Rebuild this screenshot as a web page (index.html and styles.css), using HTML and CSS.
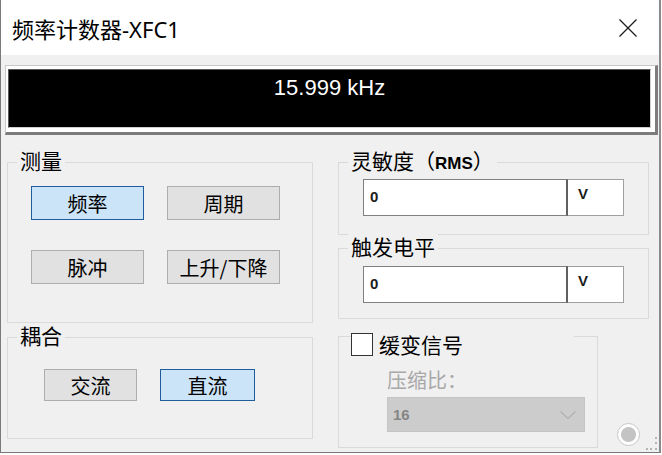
FILE: index.html
```html
<!DOCTYPE html>
<html lang="zh">
<head>
<meta charset="UTF-8">
<title>频率计数器-XFC1</title>
<link rel="stylesheet" href="styles.css">
</head>
<body>

<div class="window">
    <div class="titlebar">
        <span class="title">频率计数器-XFC1</span>
        <svg class="close" viewBox="0 0 18 18" width="18" height="18">
            <path d="M0.5 0.5 L17.5 17.5 M17.5 0.5 L0.5 17.5" stroke="#1a1a1a" stroke-width="1.2" fill="none"/>
        </svg>
    </div>

    <div class="content">
        <div class="display">
            <div class="screen">15.999 kHz</div>
        </div>

        <div class="panels">
            <div class="col col-left">
                <div class="group g-measure">
                    <span class="group-title">测量</span>
                    <div class="btn-grid">
                        <button class="btn on">频率</button>
                        <button class="btn">周期</button>
                        <button class="btn">脉冲</button>
                        <button class="btn">上升/下降</button>
                    </div>
                </div>
                <div class="group g-coupling">
                    <span class="group-title">耦合</span>
                    <div class="btn-row">
                        <button class="btn btn-ac">交流</button>
                        <button class="btn btn-dc on">直流</button>
                    </div>
                </div>
            </div>

            <div class="col col-right">
                <div class="group g-sens">
                    <span class="group-title">灵敏度（<b>RMS</b>）</span>
                    <div class="field">
                        <div class="input">0</div>
                        <div class="unit">V</div>
                    </div>
                </div>
                <div class="group g-trig">
                    <span class="group-title">触发电平</span>
                    <div class="field">
                        <div class="input">0</div>
                        <div class="unit">V</div>
                    </div>
                </div>
                <div class="ramp-row">
                    <div class="group g-ramp">
                        <label class="check-title"><span class="box"></span>缓变信号</label>
                        <div class="sub-label">压缩比：</div>
                        <div class="select">
                            <span>16</span>
                            <svg viewBox="0 0 16 8" width="16" height="8">
                                <path d="M0.5 0.5 L8 7.5 L15.5 0.5" stroke="#b0b0b0" stroke-width="1.1" fill="none"/>
                            </svg>
                        </div>
                    </div>
                    <div class="led"></div>
                </div>
            </div>
        </div>
    </div>

    <svg class="grip" viewBox="0 0 12 14" width="12" height="14">
        <rect x="9" y="0" width="2" height="2" fill="#b4b4b4"/>
        <rect x="9" y="5" width="2" height="2" fill="#b4b4b4"/>
        <rect x="9" y="11" width="2" height="2" fill="#b4b4b4"/>
        <rect x="4" y="11" width="2" height="2" fill="#b4b4b4"/>
        <rect x="0" y="11" width="2" height="2" fill="#b4b4b4"/>
    </svg>
</div>

</body>
</html>
```

FILE: styles.css
```css
* {
    box-sizing: border-box;
}

html, body {
    margin: 0;
}

body {
    width: 662px;
    height: 455px;
    overflow: hidden;
    background: #ffffff;
    font-family: "Noto Sans CJK SC", "Noto Sans", sans-serif;
}

.window {
    position: relative;
    width: 661px;
    height: 453px;
    display: flex;
    flex-direction: column;
    background: #f0f0f0;
    border-left: 1px solid #7a7a7a;
    border-right: 2px solid #8a8a8a;
    border-bottom: 1px solid #7a7a7a;
}

.titlebar {
    height: 55px;
    flex: none;
    background: #ffffff;
    display: flex;
    align-items: center;
    justify-content: space-between;
    padding: 0 22px 0 11px;
}

.title {
    font-family: "Noto Sans", "Noto Sans CJK SC", sans-serif;
    font-size: 22px;
    color: #000;
}

.close {
    display: block;
}

.content {
    flex: 1;
    padding: 10px 1px 0 4px;
}

/* zwart meetscherm */
.display {
    background: #ffffff;
    border-top: 1px solid #c8c8c8;
    border-left: 1px solid #c8c8c8;
    border-right: 3px solid #7c7c7c;
    border-bottom: 3px solid #7c7c7c;
    padding: 3px 4px 4px 2px;
}

.screen {
    height: 59px;
    background: #000;
    border-top: 1px solid #5a5a5a;
    border-left: 1px solid #5a5a5a;
    border-right: 1px solid #d0d0d0;
    border-bottom: 1px solid #d0d0d0;
    color: #fff;
    font-family: "Liberation Sans", Arial, sans-serif;
    font-size: 22px;
    line-height: 26px;
    padding-top: 5px;
    text-align: center;
}

.panels {
    display: flex;
    gap: 25px;
    margin: 27px 0 0 2px;
}

.col {
    display: flex;
    flex-direction: column;
}

.col-left {
    width: 306px;
}

.col-right {
    width: 311px;
}

.group {
    position: relative;
    border: 1px solid #dadada;
}

.group-title {
    position: absolute;
    top: -15px;
    left: 9px;
    padding: 0 3px;
    background: #f0f0f0;
    font-size: 21px;
    line-height: 24px;
    color: #000;
    white-space: nowrap;
}

.group-title b {
    font-family: "Liberation Sans", Arial, sans-serif;
    font-size: 17px;
}

.btn {
    font-family: "Noto Sans CJK SC", sans-serif;
    font-size: 20px;
    color: #000;
    background: #e1e1e1;
    border: 1px solid #adadad;
    padding: 0;
    margin: 0;
}

.btn.on {
    background: #cce4f7;
    border: 1px solid #1f5d9c;
}

.g-measure {
    height: 161px;
    padding: 23px 0 0 23px;
}

.btn-grid {
    display: grid;
    grid-template-columns: 113px 113px;
    grid-auto-rows: 34px;
    column-gap: 23px;
    row-gap: 30px;
}

.g-coupling {
    height: 102px;
    margin-top: 14px;
    padding: 31px 0 0 36px;
}

.btn-row {
    display: flex;
    gap: 23px;
}

.btn-row .btn {
    height: 32px;
}

.btn-ac {
    width: 93px;
}

.btn-dc {
    width: 95px;
}

.g-sens {
    height: 73px;
    padding: 16px 0 0 24px;
}

.g-trig {
    height: 71px;
    margin-top: 13px;
    padding: 17px 0 0 24px;
}

.field {
    display: flex;
    height: 37px;
    font-family: "Liberation Sans", Arial, sans-serif;
    font-weight: bold;
    font-size: 15px;
    color: #1c1c1c;
}

.input {
    width: 205px;
    background: #fff;
    border: 1px solid #808080;
    border-right: 2px solid #606060;
    padding: 8px 0 0 6px;
}

.unit {
    width: 56px;
    background: #fff;
    border: 1px solid #a0a0a0;
    border-left: none;
    padding: 5px 0 0 10px;
}

.ramp-row {
    display: flex;
    align-items: flex-end;
    gap: 19px;
    margin-top: 17px;
}

.g-ramp {
    width: 260px;
    height: 112px;
    padding: 31px 0 0 48px;
}

.check-title {
    position: absolute;
    top: -5px;
    left: 12px;
    width: 223px;
    display: flex;
    align-items: center;
    gap: 6px;
    background: #f0f0f0;
    font-size: 21px;
    line-height: 24px;
}

.box {
    width: 22px;
    height: 23px;
    background: #fff;
    border: 1px solid #333;
}

.sub-label {
    font-size: 20px;
    line-height: 24px;
    color: #a8a8a8;
}

.select {
    width: 198px;
    height: 35px;
    margin-top: 5px;
    background: #cccccc;
    border: 1px solid #c4c4c4;
    display: flex;
    align-items: center;
    justify-content: space-between;
    padding: 0 8px 0 5px;
    font-family: "Liberation Sans", Arial, sans-serif;
    font-weight: bold;
    font-size: 15px;
    color: #858585;
}

.select svg {
    display: block;
}

.led {
    width: 23px;
    height: 23px;
    margin-bottom: 2px;
    border-radius: 50%;
    border: 1px solid #c8c8c8;
    background: radial-gradient(circle, #c4c4c4 0 7px, #ffffff 8px);
}

.grip {
    position: absolute;
    right: 1px;
    bottom: 1px;
}
```
